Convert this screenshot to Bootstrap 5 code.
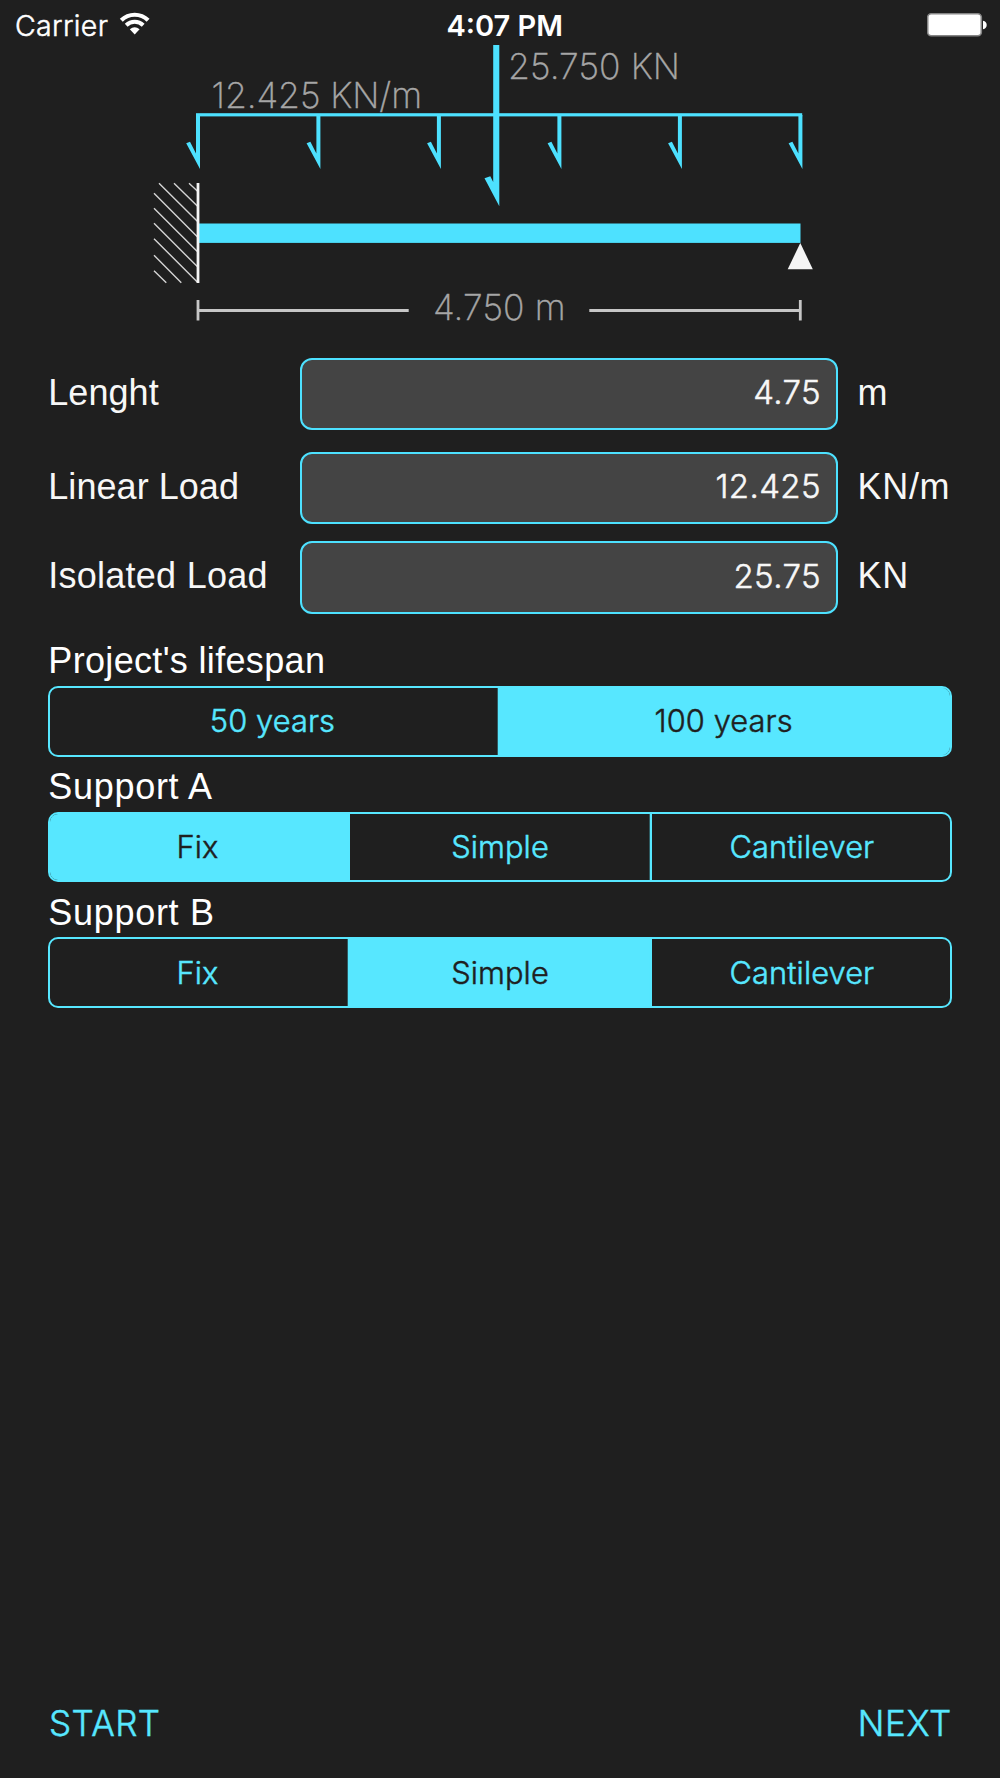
<!DOCTYPE html>
<html lang="en">
<head>
<meta charset="utf-8">
<meta name="viewport" content="width=device-width, initial-scale=1">
<title>Beam loads</title>
<link href="https://cdn.jsdelivr.net/npm/bootstrap@5.3.0/dist/css/bootstrap.min.css" rel="stylesheet">
<style>
  :root { --accent: #57e7ff; --load: #4de1ff; --ink: #f7f7f7; --base: #1f1f1f; }
  body { background: var(--base); color: var(--ink); font-family: "Liberation Sans", Arial, sans-serif; height: 1778px; overflow: hidden; }
  .status-bar { height: 45px; font-family: Inter, sans-serif; color: #fff; line-height: 45px; padding: 0 13.5px 0 15px; }
  .status-bar > div { flex: 1 1 0; }
  .carrier-name { font-size: 28.5px; font-weight: 300; padding-top: 5px; letter-spacing: .35px; -webkit-text-stroke: .5px; }
  .wifi { margin-left: 8px; }
  .clock { font-size: 29px; font-weight: 600; padding: 5px 0 0 8px; }
  .diagram { height: 300px; }
  .diagram text { font: 200 35.5px Inter, sans-serif; fill: #a6a6a6; stroke: #a6a6a6; stroke-width: .4px; }
  .panel { padding: 12.6px 48.3px 0; }
  .field-row { height: 72.6px; font-size: 36px; }
  .field-row label { width: 251.7px; padding-bottom: 2px; white-space: nowrap; letter-spacing: .05px; }
  .field-row .form-control { width: 538px; height: 100%; flex: none; background: #444; border: 2px solid var(--load); border-radius: 12px; color: var(--ink); font: 300 33px Inter, sans-serif; letter-spacing: .4px; -webkit-text-stroke: .5px; text-align: right; padding: 0 15px 3px 0; }
  .unit { padding: 0 0 2px 19.5px; letter-spacing: .7px; }
  .field-row .label-wide { letter-spacing: .25px; }
  .group-title { font-size: 36px; line-height: 49.6px; padding-top: 5.2px; letter-spacing: .33px; color: #fff; }
  .title-wide { letter-spacing: .7px; }
  .segments { height: 70.8px; border: 2.5px solid var(--accent); border-radius: 10px; overflow: hidden; }
  .segments .btn { flex: 1 1 0; border: 0; border-radius: 0; color: var(--accent); font: 300 30.8px Inter, sans-serif; letter-spacing: .1px; -webkit-text-stroke: .5px; padding: 0 2px 1px 0; }
  .segments .btn:first-child { flex: 0 0 449.3px; padding-right: 5px; }
  .segments .btn + .btn { box-shadow: -2.3px 0 0 var(--accent); }
  .segments .btn.active { background: var(--accent); color: var(--base); }
  .thirds .btn:first-child { flex: 0 0 299.6px; }
  .thirds .btn:last-child { flex: 0 0 297.6px; padding: 0 0 1px 2px; }
  .foot { padding: 0 48px 30px 49px; }
  .foot .btn { color: var(--accent); font: 300 35px/50px Inter, sans-serif; -webkit-text-stroke: .5px; letter-spacing: .4px; border: 0; padding: 0; }
  .foot .next-btn { letter-spacing: .7px; }
</style>
</head>
<body class="d-flex flex-column">
  <header class="status-bar d-flex align-items-center">
    <div class="d-flex align-items-center">
      <span class="carrier-name">Carrier</span>
      <svg class="wifi" width="44" height="45" viewBox="117 0 44 45" aria-label="Wi-Fi">
        <g fill="none" stroke="#fff" stroke-width="4">
          <path d="M122.3 20.2a19.2 19.2 0 0 1 26.8 0" stroke-width="4.2"/>
          <path d="M127.2 25.3a12.2 12.2 0 0 1 17 0"/>
        </g>
        <path d="M130.8 29.3Q135.7 25.2 140.6 29.3L135.7 34.6z" fill="#fff"/>
      </svg>
    </div>
    <div class="clock text-center">4:07 PM</div>
    <div class="d-flex justify-content-end">
      <svg width="60" height="45" viewBox="927 0 60 45" aria-label="Battery full">
        <rect x="927.7" y="13.7" width="53.6" height="22" rx="3.5" fill="#fff" stroke="#858585" stroke-width="1.6"/>
        <path d="M983 20.7Q986.7 21.5 986.7 25T983 29.3z" fill="#fff"/>
      </svg>
    </div>
  </header>

  <svg class="diagram d-block w-100" viewBox="0 45 1000 300">
    <defs>
      <path id="arrow" d="M2 0V54L-11.8 28.3L-8 26.8L-2 38.5V0z"/>
    </defs>
    <text x="211.5" y="107.5" textLength="210.5">12.425 KN/m</text>
    <text x="508" y="78.5" textLength="172">25.750 KN</text>
    <text x="433" y="320" textLength="132.5">4.750 m</text>
    <g fill="#4de1ff">
      <rect x="196" y="113.2" width="606.2" height="3.2"/>
      <use href="#arrow" x="198" y="115"/>
      <use href="#arrow" x="318.4" y="115"/>
      <use href="#arrow" x="438.9" y="115"/>
      <use href="#arrow" x="559.4" y="115"/>
      <use href="#arrow" x="679.9" y="115"/>
      <use href="#arrow" x="800.4" y="115"/>
      <path d="M499.3 45V206.3L484.5 178.3L490.3 176.3L493.2 182V45z"/>
      <rect x="198" y="223.5" width="602.5" height="19.4"/>
    </g>
    <path d="M159 183.3l38.3 38M174 183.3l23.3 22.7M189 183.3l8.3 7.7M154 193.3l43.3 43.4M154 208.3l43.3 43.3M154 223.3l43.3 43.3M154 238.7l43.3 43.3M154 255.3l27.3 27.4M154 270.7l12.3 12" stroke="#d4d4d4" stroke-width="1.4" fill="none"/>
    <path d="M198 183V283" stroke="#f5f5f5" stroke-width="2.8"/>
    <path d="M800.3 243L812.8 269.3H787.7z" fill="#f5f5f5"/>
    <path d="M198 300V320.5M198 310.5H408.7M589.3 310.5H800.3M800.3 300V320.5" stroke="#c6c6c6" stroke-width="2.8" fill="none"/>
  </svg>

  <main class="panel">
    <div class="field-row d-flex align-items-center">
      <label for="len">Lenght</label>
      <input id="len" class="form-control" value="4.75">
      <span class="unit">m</span>
    </div>
    <div class="field-row d-flex align-items-center" style="margin-top:21.5px">
      <label for="lin">Linear Load</label>
      <input id="lin" class="form-control" value="12.425">
      <span class="unit">KN/m</span>
    </div>
    <div class="field-row d-flex align-items-center" style="margin-top:16.8px">
      <label for="iso" class="label-wide">Isolated Load</label>
      <input id="iso" class="form-control" value="25.75">
      <span class="unit">KN</span>
    </div>

    <div class="group-title" style="margin-top:17.5px">Project's lifespan</div>
    <div class="segments d-flex">
      <button class="btn">50 years</button>
      <button class="btn active">100 years</button>
    </div>
    <div class="group-title title-wide">Support A</div>
    <div class="segments thirds d-flex">
      <button class="btn active">Fix</button>
      <button class="btn">Simple</button>
      <button class="btn">Cantilever</button>
    </div>
    <div class="group-title title-wide">Support B</div>
    <div class="segments thirds d-flex">
      <button class="btn">Fix</button>
      <button class="btn active">Simple</button>
      <button class="btn">Cantilever</button>
    </div>
  </main>

  <footer class="foot d-flex justify-content-between mt-auto">
    <button class="btn">START</button>
    <button class="btn next-btn">NEXT</button>
  </footer>
<script src="https://cdn.jsdelivr.net/npm/bootstrap@5.3.0/dist/js/bootstrap.bundle.min.js"></script>
</body>
</html>
